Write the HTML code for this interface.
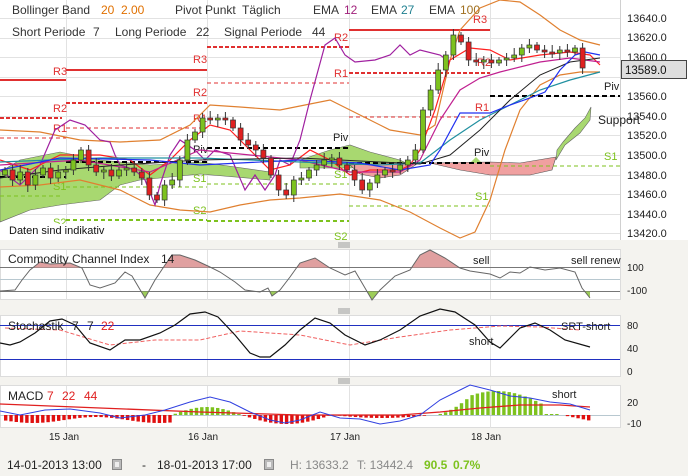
<!DOCTYPE html>
<html><head><meta charset="utf-8"><style>
body{margin:0;background:#f4f3ef;font-family:"Liberation Sans",sans-serif;}
svg{display:block}
text{font-family:"Liberation Sans",sans-serif;white-space:pre}
</style></head><body>
<svg id="s" width="688" height="476" viewBox="0 0 688 476" xmlns="http://www.w3.org/2000/svg" xml:space="preserve">
<rect x="0" y="0" width="688" height="476" fill="#f4f3ef"/>
<rect x="0" y="0" width="688" height="240" fill="#fff"/>
<g stroke="#e2e2e2" stroke-width="1">
<line x1="0" y1="18.5" x2="620" y2="18.5"/><line x1="0" y1="38.5" x2="620" y2="38.5"/><line x1="0" y1="57.5" x2="620" y2="57.5"/><line x1="0" y1="77.5" x2="620" y2="77.5"/><line x1="0" y1="96.5" x2="620" y2="96.5"/><line x1="0" y1="116.5" x2="620" y2="116.5"/><line x1="0" y1="135.5" x2="620" y2="135.5"/><line x1="0" y1="155.5" x2="620" y2="155.5"/><line x1="0" y1="175.5" x2="620" y2="175.5"/><line x1="0" y1="194.5" x2="620" y2="194.5"/><line x1="0" y1="214.5" x2="620" y2="214.5"/><line x1="0" y1="233.5" x2="620" y2="233.5"/>
<line x1="66.5" y1="0" x2="66.5" y2="240"/><line x1="207.5" y1="0" x2="207.5" y2="240"/><line x1="349.5" y1="0" x2="349.5" y2="240"/><line x1="490.5" y1="0" x2="490.5" y2="240"/>
<line x1="620.5" y1="0" x2="620.5" y2="240" stroke="#d0d0d0"/>
</g>
<polygon points="0,172 20,160 60,152 100,160 150,165 200,162 270,172 270,180 200,174 140,180 120,185 100,200 60,205 30,210 0,222" fill="#a8d870" stroke="#666" stroke-width="0.6"/>
<polygon points="300,160 330,150 350,145 370,152 400,160 410,165 350,168 300,168" fill="#a8d870" stroke="#666" stroke-width="0.6"/>
<polygon points="350,165 420,162 400,175 380,178 360,174" fill="#f0a0a0" stroke="#555" stroke-width="0.6"/>
<polygon points="430,163 490,162 520,163 556,157 552,170 530,175 490,175 460,170" fill="#f0a0a0" stroke="#555" stroke-width="0.6"/>
<polygon points="470,163 476,157 482,163" fill="#a8d870"/>
<polygon points="557,150 563,142 575,128 585,118 591,107 590,120 580,133 565,145 556,160" fill="#a8d870" stroke="#666" stroke-width="0.6"/>
<g fill="none">
<line x1="0" y1="80" x2="66" y2="80" stroke="#e03030" stroke-width="2"/>
<line x1="0" y1="118" x2="62" y2="118" stroke="#e03030" stroke-dasharray="4,2" stroke-width="2"/>
<line x1="0" y1="138" x2="66" y2="138" stroke="#e03030" stroke-dasharray="4,3" stroke-width="1"/>
<line x1="0" y1="177" x2="66" y2="177" stroke="#000" stroke-dasharray="5,3" stroke-width="2"/>
<line x1="0" y1="196" x2="62" y2="196" stroke="#7dc21e" stroke-dasharray="4,3" stroke-width="1"/>
<line x1="0" y1="235" x2="62" y2="235" stroke="#7dc21e" stroke-dasharray="4,3" stroke-width="2"/>
<line x1="66" y1="70" x2="207" y2="70" stroke="#e03030" stroke-width="2"/>
<line x1="66" y1="103" x2="207" y2="103" stroke="#e03030" stroke-dasharray="4,2" stroke-width="2"/>
<line x1="66" y1="128" x2="207" y2="128" stroke="#e03030" stroke-dasharray="4,3" stroke-width="1"/>
<line x1="66" y1="162" x2="207" y2="162" stroke="#000" stroke-dasharray="5,3" stroke-width="2"/>
<line x1="66" y1="187" x2="207" y2="187" stroke="#7dc21e" stroke-dasharray="4,3" stroke-width="1"/>
<line x1="66" y1="220" x2="207" y2="220" stroke="#7dc21e" stroke-dasharray="4,3" stroke-width="2"/>
<line x1="207" y1="47" x2="349" y2="47" stroke="#e03030" stroke-dasharray="4,2" stroke-width="2"/>
<line x1="207" y1="83" x2="349" y2="83" stroke="#e03030" stroke-dasharray="4,3" stroke-width="1"/>
<line x1="207" y1="148" x2="349" y2="148" stroke="#000" stroke-dasharray="5,3" stroke-width="2"/>
<line x1="207" y1="184" x2="349" y2="184" stroke="#7dc21e" stroke-dasharray="4,3" stroke-width="1"/>
<line x1="207" y1="221" x2="349" y2="221" stroke="#7dc21e" stroke-dasharray="4,3" stroke-width="2"/>
<line x1="349" y1="30" x2="490" y2="30" stroke="#e03030" stroke-width="2"/>
<line x1="349" y1="73" x2="490" y2="73" stroke="#e03030" stroke-dasharray="4,2" stroke-width="2"/>
<line x1="349" y1="117" x2="490" y2="117" stroke="#e03030" stroke-dasharray="4,3" stroke-width="1"/>
<line x1="349" y1="163" x2="490" y2="163" stroke="#000" stroke-dasharray="5,3" stroke-width="2"/>
<line x1="349" y1="206" x2="490" y2="206" stroke="#7dc21e" stroke-dasharray="4,3" stroke-width="1"/>
<line x1="490" y1="96" x2="620" y2="96" stroke="#000" stroke-dasharray="5,3" stroke-width="2"/>
<line x1="490" y1="166" x2="620" y2="166" stroke="#7dc21e" stroke-dasharray="4,3" stroke-width="1"/>
</g>
<g font-size="11" fill="#e03030">
<text x="53" y="75">R3</text><text x="53" y="112">R2</text><text x="53" y="132">R1</text>
<text x="193" y="63">R3</text><text x="193" y="96">R2</text><text x="193" y="122">R1</text>
<text x="334" y="41">R2</text><text x="334" y="77">R1</text>
<text x="473" y="23">R3</text><text x="477" y="66">R2</text><text x="475" y="111">R1</text>
</g>
<g font-size="11" fill="#7dc21e">
<text x="53" y="190">S1</text><text x="53" y="226">S2</text>
<text x="193" y="182">S1</text><text x="193" y="214">S2</text>
<text x="334" y="178">S1</text><text x="334" y="240">S2</text>
<text x="475" y="200">S1</text><text x="604" y="160">S1</text>
</g>
<g font-size="11" fill="#222">
<text x="193" y="153">Piv</text><text x="333" y="141">Piv</text><text x="474" y="156">Piv</text><text x="604" y="90">Piv</text>
<text x="598" y="124" font-size="12">Support</text>
</g>
<g fill="none" stroke-width="1.2">
<polyline stroke="#e08030" points="0,130 40,132 80,140 120,142 160,140 190,125 210,105 240,107 280,110 300,106 330,100 360,115 390,130 420,135 435,125 450,60 460,30 480,8 500,0 520,2 540,15 560,30 580,40 600,45"/>
<polyline stroke="#e08030" points="0,187 40,185 80,180 120,190 150,205 180,210 210,212 240,205 270,200 300,198 340,194 380,200 410,212 440,228 460,238 475,232 490,200 505,150 520,110 540,85 560,75 580,72 600,72"/>
<polyline stroke="#a020a0" points="0,170 20,185 40,165 55,130 70,120 85,125 100,140 110,142 115,155 120,165 135,170 145,180 155,205 160,185 170,155 180,140 195,150 205,160 215,150 230,155 245,190 255,175 265,190 275,175 280,160 290,165 300,140 310,100 325,45 335,38 345,55 355,62 375,60 390,55 400,45 410,55 420,50 440,55 450,62"/>
<polyline stroke="#ff2020" points="0,160 30,170 60,155 100,155 130,160 150,175 170,160 190,140 210,125 230,130 250,150 270,170 290,165 310,150 330,160 350,175 370,170 400,170 410,165 420,150 435,110 450,60 470,48 490,50 510,60 540,55 570,52 590,55 600,65"/>
<polyline stroke="#c02090" points="0,165 80,160 150,172 200,150 250,155 300,160 350,172 400,172 420,160 440,120 460,90 480,78 500,72 540,62 570,58 600,62"/>
<polyline stroke="#2090a0" points="0,162 100,158 200,158 300,162 380,165 420,163 450,140 480,120 510,105 540,90 570,80 600,72"/>
<polyline stroke="#222" stroke-width="1" points="0,178 60,170 120,165 200,160 300,158 380,162 420,164 450,155 480,130 510,100 540,75 570,62 600,58"/>
<polyline stroke="#2030f0" points="0,170 60,158 150,160 200,165 300,160 360,163 400,170 430,165 440,150 460,113 490,113 510,105 530,98 545,92 560,70 575,55 585,52 600,55"/>
</g>
<g id="candles"></g>
<rect x="0" y="224" width="130" height="16" fill="#fff"/>
<text x="9" y="234" font-size="11" fill="#111">Daten sind indikativ</text>
<g font-size="12" fill="#333">
<text x="12" y="14">Bollinger Band</text><text x="101" y="14" fill="#e07000">20</text><text x="121" y="14" fill="#e07000">2.00</text>
<text x="175" y="14">Pivot Punkt</text><text x="242" y="14">Täglich</text>
<text x="313" y="14">EMA</text><text x="344" y="14" fill="#a0207a">12</text>
<text x="371" y="14">EMA</text><text x="401" y="14" fill="#208090">27</text>
<text x="429" y="14">EMA</text><text x="460" y="14" fill="#a07020">100</text>
<text x="12" y="36">Short Periode</text><text x="93" y="36">7</text>
<text x="115" y="36">Long Periode</text><text x="196" y="36">22</text>
<text x="224" y="36">Signal Periode</text><text x="312" y="36">44</text>
</g>
<g font-size="11" fill="#222">
<text x="627" y="22">13640.0</text><text x="627" y="41">13620.0</text><text x="627" y="61">13600.0</text><text x="627" y="100">13560.0</text><text x="627" y="120">13540.0</text><text x="627" y="139">13520.0</text><text x="627" y="159">13500.0</text><text x="627" y="179">13480.0</text><text x="627" y="198">13460.0</text><text x="627" y="218">13440.0</text><text x="627" y="237">13420.0</text>
</g>
<rect x="621.5" y="60.5" width="65" height="18" fill="#dedede" stroke="#444"/>
<text x="625" y="74" font-size="11.5" fill="#111">13589.0</text>

<g stroke="#999"><line x1="338" y1="243" x2="350" y2="243"/><line x1="338" y1="245" x2="350" y2="245"/><line x1="338" y1="247" x2="350" y2="247"/>
<line x1="338" y1="309" x2="350" y2="309"/><line x1="338" y1="311" x2="350" y2="311"/><line x1="338" y1="313" x2="350" y2="313"/>
<line x1="338" y1="379" x2="350" y2="379"/><line x1="338" y1="381" x2="350" y2="381"/><line x1="338" y1="383" x2="350" y2="383"/></g>

<rect x="0.5" y="249.5" width="620" height="50" fill="#fff" stroke="#dcdcdc"/>
<g stroke="#e2e2e2"><line x1="66.5" y1="250" x2="66.5" y2="300"/><line x1="207.5" y1="250" x2="207.5" y2="300"/><line x1="349.5" y1="250" x2="349.5" y2="300"/><line x1="490.5" y1="250" x2="490.5" y2="300"/></g>
<line x1="0" y1="279.5" x2="620" y2="279.5" stroke="#b8c8d0"/>
<line x1="0" y1="267.5" x2="620" y2="267.5" stroke="#777"/>
<line x1="0" y1="291.5" x2="620" y2="291.5" stroke="#777"/>
<defs>
<clipPath id="cb"><rect x="0" y="291.5" width="620" height="10"/></clipPath>
<clipPath id="ca"><rect x="0" y="249" width="620" height="18.5"/></clipPath>
</defs>
<g id="ccig"></g>
<text x="8" y="263" font-size="12" fill="#222">Commodity Channel Index</text><text x="161" y="263" font-size="12" fill="#222">14</text>
<text x="473" y="264" font-size="11" fill="#222">sell</text><text x="571" y="264" font-size="11" fill="#222">sell renew</text>
<text x="627" y="271" font-size="10" fill="#222">100</text><text x="627" y="294" font-size="10" fill="#222">-100</text>

<rect x="0.5" y="315.5" width="620" height="61" fill="#fff" stroke="#dcdcdc"/>
<g stroke="#e2e2e2"><line x1="66.5" y1="316" x2="66.5" y2="376"/><line x1="207.5" y1="316" x2="207.5" y2="376"/><line x1="349.5" y1="316" x2="349.5" y2="376"/><line x1="490.5" y1="316" x2="490.5" y2="376"/></g>
<line x1="0" y1="325.5" x2="620" y2="325.5" stroke="#2030c0"/>
<line x1="0" y1="359.5" x2="620" y2="359.5" stroke="#2030c0"/>
<polyline fill="none" stroke="#f06060" stroke-width="1" stroke-dasharray="4,2" points="5,328 60,330 110,345 155,340 200,340 240,331 300,335 350,345 400,337 450,330 500,326 540,327 580,330"/>
<polyline fill="none" stroke="#111" stroke-width="1.2" points="0,343 10,345 20,342 35,333 50,321 62,319 75,325 90,343 110,350 125,340 140,340 160,333 175,325 190,314 205,312 218,317 235,335 250,353 260,357 270,357 285,345 300,330 315,318 330,323 345,335 365,345 380,340 400,330 420,316 440,309 455,312 475,325 490,342 500,348 510,338 520,328 535,323 550,330 565,340 590,347"/>
<g font-size="12" fill="#222"><text x="8" y="330">Stochastik</text><text x="72" y="330">7</text><text x="87" y="330">7</text><text x="101" y="330" fill="#e02020">22</text></g>
<text x="561" y="330" font-size="11" fill="#222">SRT-short</text><text x="469" y="345" font-size="11" fill="#222">short</text>
<g font-size="10" fill="#222"><text x="627" y="329">80</text><text x="627" y="352">40</text><text x="627" y="375">0</text></g>

<rect x="0.5" y="385.5" width="620" height="42" fill="#fff" stroke="#dcdcdc"/>
<g stroke="#e2e2e2"><line x1="66.5" y1="386" x2="66.5" y2="428"/><line x1="207.5" y1="386" x2="207.5" y2="428"/><line x1="349.5" y1="386" x2="349.5" y2="428"/><line x1="490.5" y1="386" x2="490.5" y2="428"/></g>
<line x1="0" y1="415.5" x2="620" y2="415.5" stroke="#b8c8d0"/>
<g id="macdg"></g>
<polyline fill="none" stroke="#e02020" stroke-width="1.3" points="0,404 100,408 200,412 300,415 400,415 440,412 480,408 520,405 560,405 590,407"/>
<polyline fill="none" stroke="#3040e0" stroke-width="1" points="0,411 20,415 45,410 70,409 100,413 120,418 145,415 165,410 190,402 210,397 230,402 250,412 270,420 285,423 300,420 320,412 340,418 360,419 380,424 400,421 420,415 440,400 460,390 470,385 490,390 510,396 530,398 550,402 570,404 590,410"/>
<g font-size="12"><text x="8" y="400" fill="#222">MACD</text><text x="47" y="400" fill="#e02020">7</text><text x="62" y="400" fill="#e02020">22</text><text x="84" y="400" fill="#e02020">44</text></g>
<text x="552" y="398" font-size="11" fill="#222">short</text>
<g font-size="10" fill="#222"><text x="627" y="406">20</text><text x="627" y="427">-10</text></g>

<g font-size="10" fill="#222"><text x="49" y="440">15 Jan</text><text x="188" y="440">16 Jan</text><text x="330" y="440">17 Jan</text><text x="471" y="440">18 Jan</text></g>
<g font-size="12">
<text x="7" y="469" fill="#222">14-01-2013 13:00</text>
<rect x="112.5" y="459.5" width="9" height="10" fill="#bbb" stroke="#888"/><rect x="115" y="462" width="4" height="5" fill="#eee"/>
<text x="142" y="469" fill="#222">-</text>
<text x="157" y="469" fill="#222">18-01-2013 17:00</text>
<rect x="264.5" y="459.5" width="9" height="10" fill="#bbb" stroke="#888"/><rect x="267" y="462" width="4" height="5" fill="#eee"/>
<text x="290" y="469" fill="#888">H: 13633.2</text><text x="357" y="469" fill="#888">T: 13442.4</text>
<text x="424" y="469" fill="#7dc21e" font-weight="bold">90.5</text><text x="453" y="469" fill="#7dc21e" font-weight="bold">0.7%</text>
</g>
</svg>
<script>
(function(){
var NS="http://www.w3.org/2000/svg";
function el(p,t,a){var e=document.createElementNS(NS,t);for(var k in a)e.setAttribute(k,a[k]);p.appendChild(e);return e;}
var closes=[170,180,172,185,175,168,178,172,170,160,150,165,172,170,176,170,168,172,178,195,200,185,180,160,140,132,118,120,118,120,128,140,145,150,158,175,190,195,180,178,170,165,160,158,165,170,180,190,183,175,170,170,165,160,150,110,90,70,55,35,42,60,62,60,63,60,58,55,48,45,50,52,53,50,52,48,68];
var g=document.getElementById("candles");var prev=175;
for(var i=0;i<closes.length;i++){var x=5+i*7.6,o=prev,c=closes[i];var tp=Math.min(o,c),bt=Math.max(o,c);if(bt-tp<2){bt=tp+2;}
var hi=tp-3-(i*7%5),lo=bt+3+(i*3%5);
el(g,"line",{x1:x,y1:hi,x2:x,y2:lo,stroke:"#333","stroke-width":1});
el(g,"rect",{x:x-2.5,y:tp,width:5,height:bt-tp,fill:(c<o?"#7dc21e":"#e02020"),stroke:"#333","stroke-width":0.7});prev=c;}
var cci="0,291 15,290 22,280 30,270 40,262 50,264 70,263 82,268 90,285 100,288 115,283 125,272 132,276 145,298 155,280 165,265 172,255 180,255 195,260 210,267 220,272 235,282 245,290 260,292 268,288 272,296 280,290 290,277 300,263 315,258 330,268 345,275 355,271 365,288 372,300 380,290 395,276 410,270 420,255 430,250 445,258 460,268 470,271 490,274 500,278 510,272 520,273 530,267 545,270 560,268 575,272 582,288 590,298";
var cg=document.getElementById("ccig");
el(cg,"polygon",{points:"0,291.5 "+cci+" 590,291.5",fill:"#8cc43c","clip-path":"url(#cb)",opacity:0.85});
el(cg,"polygon",{points:"0,267.5 "+cci+" 590,267.5",fill:"#e0a0a0","clip-path":"url(#ca)"});
el(cg,"polyline",{points:cci,fill:"none",stroke:"#666","stroke-width":1});
var mg=document.getElementById("macdg");
function h(x){
 if(x<170)return -(5+3*Math.sin(x/20));
 if(x<240)return 8*Math.sin((x-170)/70*Math.PI);
 if(x<330)return -9*Math.sin((x-240)/90*Math.PI);
 if(x<430)return -3*Math.sin((x-330)/100*Math.PI);
 if(x<540)return 24*Math.sin((x-430)/130*Math.PI)*(x<470?(x-430)/40:1);
 if(x<560)return 1;
 return -(x-560)/5;}
for(var xx=4;xx<592;xx+=5.3){var v=h(xx);if(Math.abs(v)<0.5)continue;
 el(mg,"rect",{x:xx,y:v>0?415-v:415,width:3.4,height:Math.abs(v),fill:v>0?"#7dc21e":"#e01010"});}
})();
</script>
</body></html>
